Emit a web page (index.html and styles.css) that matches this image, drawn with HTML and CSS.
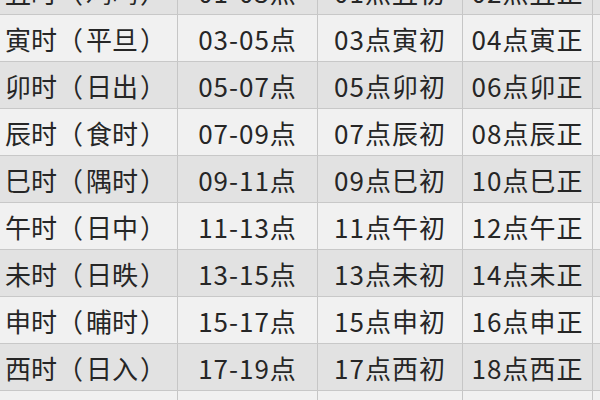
FILE: index.html
```html
<!DOCTYPE html>
<html lang="zh">
<head>
<meta charset="utf-8">
<link rel="stylesheet" href="styles.css">
</head>
<body>
<div class="table">
  <div class="row dark"><div class="c name"><span>丑时</span><span class="po">（</span><span>鸡鸣</span><span class="pc">）</span></div><div class="c">01-03点</div><div class="c">01点丑初</div><div class="c">02点丑正</div></div>
  <div class="row light"><div class="c name"><span>寅时</span><span class="po">（</span><span>平旦</span><span class="pc">）</span></div><div class="c">03-05点</div><div class="c">03点寅初</div><div class="c">04点寅正</div></div>
  <div class="row dark"><div class="c name"><span>卯时</span><span class="po">（</span><span>日出</span><span class="pc">）</span></div><div class="c">05-07点</div><div class="c">05点卯初</div><div class="c">06点卯正</div></div>
  <div class="row light"><div class="c name"><span>辰时</span><span class="po">（</span><span>食时</span><span class="pc">）</span></div><div class="c">07-09点</div><div class="c">07点辰初</div><div class="c">08点辰正</div></div>
  <div class="row dark"><div class="c name"><span>巳时</span><span class="po">（</span><span>隅时</span><span class="pc">）</span></div><div class="c">09-11点</div><div class="c">09点巳初</div><div class="c">10点巳正</div></div>
  <div class="row light"><div class="c name"><span>午时</span><span class="po">（</span><span>日中</span><span class="pc">）</span></div><div class="c">11-13点</div><div class="c">11点午初</div><div class="c">12点午正</div></div>
  <div class="row dark"><div class="c name"><span>未时</span><span class="po">（</span><span>日昳</span><span class="pc">）</span></div><div class="c">13-15点</div><div class="c">13点未初</div><div class="c">14点未正</div></div>
  <div class="row light"><div class="c name"><span>申时</span><span class="po">（</span><span>晡时</span><span class="pc">）</span></div><div class="c">15-17点</div><div class="c">15点申初</div><div class="c">16点申正</div></div>
  <div class="row dark"><div class="c name"><span>西时</span><span class="po">（</span><span>日入</span><span class="pc">）</span></div><div class="c">17-19点</div><div class="c">17点西初</div><div class="c">18点西正</div></div>
  <div class="row light"><div class="c name"><span>戌时</span><span class="po">（</span><span>黄昏</span><span class="pc">）</span></div><div class="c">19-21点</div><div class="c">19点戌初</div><div class="c">20点戌正</div></div>
</div>
</body>
</html>
```

FILE: styles.css
```css
html, body {
  margin: 0;
  padding: 0;
  width: 600px;
  height: 400px;
  overflow: hidden;
  background: #f2f2f2;
}
.table {
  margin-top: -32px;
  font-family: "Noto Sans CJK SC", "Noto Sans", sans-serif;
  font-size: 26px;
  color: #262626;
}
.row {
  display: grid;
  grid-template-columns: 178px 140px 145px 130px 7px;
  height: 47px;
  box-sizing: border-box;
  border-bottom: 1px solid #c8c8c8;
}
.row::after {
  content: "";
}
.dark { background: #e2e2e2; }
.light { background: #f1f1f1; }
.c {
  display: flex;
  align-items: center;
  justify-content: center;
  border-right: 1px solid #c6c6c6;
  white-space: nowrap;
  line-height: 1;
  letter-spacing: 1px;
  padding-top: 2px;
}
.c.name {
  justify-content: flex-start;
  padding-left: 5px;
  letter-spacing: 0;
}
.po, .pc {
  display: inline-block;
  width: 26px;
}
.po {
  text-align: right;
  margin-right: 3px;
}
.pc {
  text-align: left;
  margin-left: 2px;
}
```
